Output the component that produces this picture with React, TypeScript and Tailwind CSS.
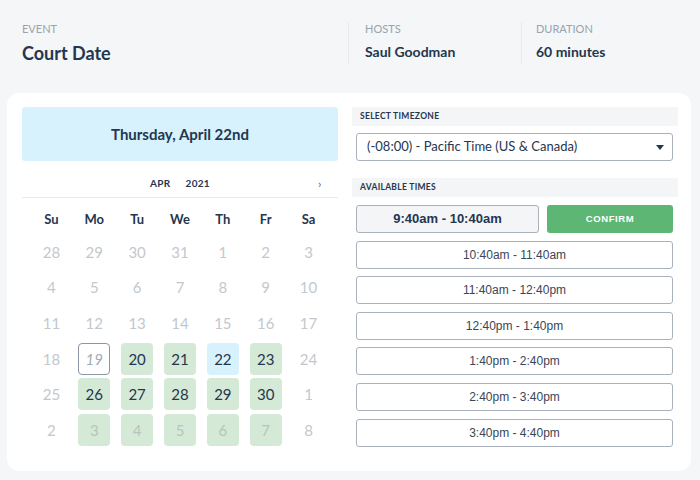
import React from 'react';

const NAVY = 'text-[#25364f]';

type Cell = { n: number; kind: 'muted' | 'open' | 'selected' | 'today' | 'next' };

const weeks: Cell[][] = [
  [28, 29, 30, 31, 1, 2, 3].map((n) => ({ n, kind: 'muted' as const })),
  [4, 5, 6, 7, 8, 9, 10].map((n) => ({ n, kind: 'muted' as const })),
  [11, 12, 13, 14, 15, 16, 17].map((n) => ({ n, kind: 'muted' as const })),
  [
    { n: 18, kind: 'muted' },
    { n: 19, kind: 'today' },
    { n: 20, kind: 'open' },
    { n: 21, kind: 'open' },
    { n: 22, kind: 'selected' },
    { n: 23, kind: 'open' },
    { n: 24, kind: 'muted' },
  ],
  [
    { n: 25, kind: 'muted' },
    { n: 26, kind: 'open' },
    { n: 27, kind: 'open' },
    { n: 28, kind: 'open' },
    { n: 29, kind: 'open' },
    { n: 30, kind: 'open' },
    { n: 1, kind: 'muted' },
  ],
  [
    { n: 2, kind: 'muted' },
    { n: 3, kind: 'next' },
    { n: 4, kind: 'next' },
    { n: 5, kind: 'next' },
    { n: 6, kind: 'next' },
    { n: 7, kind: 'next' },
    { n: 8, kind: 'muted' },
  ],
];

const times = [
  '10:40am - 11:40am',
  '11:40am - 12:40pm',
  '12:40pm - 1:40pm',
  '1:40pm - 2:40pm',
  '2:40pm - 3:40pm',
  '3:40pm - 4:40pm',
];

function DayCell({ cell }: { cell: Cell }) {
  const base = 'w-[32px] h-[32px] rounded-[4px] flex items-center justify-center text-[15px]';
  switch (cell.kind) {
    case 'open':
      return <div className={`${base} bg-[#d4e9d6] ${NAVY}`}>{cell.n}</div>;
    case 'selected':
      return <div className={`${base} bg-[#d7f2fc] ${NAVY}`}>{cell.n}</div>;
    case 'next':
      return <div className={`${base} bg-[#d4e9d6] text-[#b9c3c0]`}>{cell.n}</div>;
    case 'today':
      return <div className={`${base} border border-[#8b95a3] italic text-[#a3abb5]`}>{cell.n}</div>;
    default:
      return <div className={`${base} text-[#c3c8ce]`}>{cell.n}</div>;
  }
}

export default function App() {
  return (
    <div
      className="w-[700px] h-[480px] overflow-hidden bg-[#f4f6f7]"
      style={{ fontFamily: 'Lato, "Open Sans", sans-serif' }}
    >
      {/* Event header */}
      <div className="flex pt-[22px] h-[93px]">
        <div className="w-[348px] pl-[22px]">
          <p className="text-[11px] uppercase text-[#98a3ae] leading-[14px]">Event</p>
          <h1 className={`mt-[6px] text-[18px] font-bold ${NAVY} leading-[22px]`}>Court Date</h1>
        </div>
        <div className="w-[173px] pl-[16px] border-l border-[#e8ebee] h-[42px]">
          <p className="text-[11px] uppercase text-[#98a3ae] leading-[14px]">Hosts</p>
          <p className={`mt-[7px] text-[14px] font-bold ${NAVY} leading-[18px]`}>Saul Goodman</p>
        </div>
        <div className="pl-[14px] border-l border-[#e8ebee] h-[42px]">
          <p className="text-[11px] uppercase text-[#98a3ae] leading-[14px]">Duration</p>
          <p className={`mt-[7px] text-[14px] font-bold ${NAVY} leading-[18px]`}>60 minutes</p>
        </div>
      </div>

      {/* Booking card */}
      <div className="ml-[7px] w-[684px] h-[378px] rounded-[12px] bg-white flex gap-[14px] pl-[15px] pt-[14px]">
        {/* Calendar */}
        <div className="w-[316px]">
          <div className="h-[54px] rounded-[3px] bg-[#d7f2fc] flex items-center justify-center">
            <span className={`text-[15px] font-bold ${NAVY}`}>Thursday, April 22nd</span>
          </div>
          <div className="relative h-[37px] pt-[8px] flex items-center justify-center border-b border-[#e9ecef]">
            <span className={`text-[10px] font-bold ${NAVY} tracking-[0.3px]`}>
              APR<span className="ml-[15px]">2021</span>
            </span>
            <span className="absolute left-[296px] top-[17px] text-[12px] text-[#5a6675] leading-none">›</span>
          </div>
          <div className="px-[8px]">
            <div className="grid grid-cols-7 mt-[12px] h-[20px] items-center">
              {['Su', 'Mo', 'Tu', 'We', 'Th', 'Fr', 'Sa'].map((d) => (
                <span key={d} className={`text-center text-[13px] font-bold ${NAVY}`}>
                  {d}
                </span>
              ))}
            </div>
            <div className="grid grid-cols-7 gap-y-[3.6px] mt-[6px]">
              {weeks.flat().map((c, i) => (
                <div key={i} className="flex justify-center">
                  <DayCell cell={c} />
                </div>
              ))}
            </div>
          </div>
        </div>

        {/* Times */}
        <div className="w-[326px]">
          <div className="h-[19px] bg-[#f3f5f7] flex items-center pl-[8px]">
            <span className={`text-[8.5px] font-bold ${NAVY} tracking-[0.3px]`}>SELECT TIMEZONE</span>
          </div>
          <div className="mt-[7px] ml-[4px] w-[317px] h-[28px] border border-[#a9b1bc] rounded-[3px] flex items-center pl-[10px] pr-[8px]">
            <span className={`flex-1 text-[13px] ${NAVY}`}>(-08:00) - Pacific Time (US &amp; Canada)</span>
            <svg width="8" height="5" viewBox="0 0 8 5">
              <path d="M0 0 L8 0 L4 5 Z" fill="#25364f" />
            </svg>
          </div>
          <div className="mt-[17px] h-[19px] bg-[#f3f5f7] flex items-center pl-[8px]">
            <span className={`text-[8.5px] font-bold ${NAVY} tracking-[0.3px]`}>AVAILABLE TIMES</span>
          </div>
          <div
            className="mt-[8px] ml-[4px] w-[317px] flex flex-col gap-[7.6px]"
            style={{ fontFamily: '"Liberation Sans", Arial, sans-serif' }}
          >
            <div className="flex gap-[8px]">
              <button className={`w-[183px] h-[28px] rounded-[3px] border border-[#a9b1bc] bg-[#f3f5f7] text-[13px] font-bold ${NAVY}`}>
                9:40am - 10:40am
              </button>
              <button className="flex-1 h-[28px] rounded-[3px] bg-[#5db674] text-white text-[9.5px] font-bold tracking-[0.6px]">
                CONFIRM
              </button>
            </div>
            {times.map((t) => (
              <button
                key={t}
                className="w-full h-[28px] rounded-[3px] border border-[#a9b1bc] bg-white text-[12px] text-[#3a4658]"
              >
                {t}
              </button>
            ))}
          </div>
        </div>
      </div>
    </div>
  );
}
